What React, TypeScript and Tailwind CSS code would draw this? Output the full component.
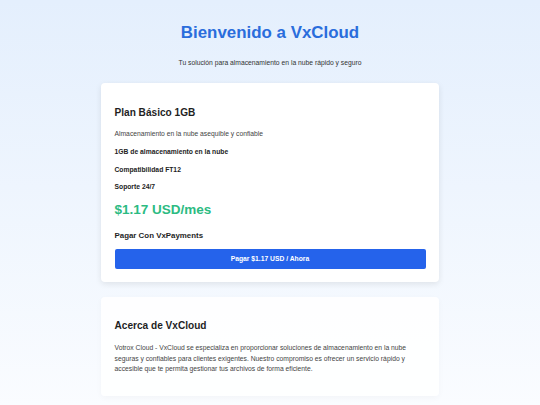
import React from "react";

export default function App() {
  return (
    <div
      className="min-h-[405px] w-full bg-gradient-to-b from-[#e4effd] to-[#fafcff] pb-[10px]"
      style={{ fontFamily: '"Liberation Sans", Arial, sans-serif' }}
    >
      <div className="mx-auto flex w-[338px] flex-col items-stretch pt-[23px]">
        <h1 className="text-center text-[16.9px] font-bold leading-[20px] text-[#2a6ddc]">
          Bienvenido a VxCloud
        </h1>
        <p className="mt-[16px] text-center text-[6.75px] leading-[8px] text-[#333]">
          Tu solución para almacenamiento en la nube rápido y seguro
        </p>

        <div className="mt-[16px] rounded-[4px] bg-white px-[13.5px] pt-[23.5px] pb-[13px] shadow-[0_2px_6px_rgba(0,0,0,0.09)]">
          <h2 className="text-[10.1px] font-bold leading-[12px] text-[#1f1f1f]">
            Plan Básico 1GB
          </h2>
          <p className="mt-[10.6px] text-[6.75px] leading-[10.8px] text-[#444]">
            Almacenamiento en la nube asequible y confiable
          </p>
          <p className="mt-[7px] text-[6.75px] font-bold leading-[10.8px] text-[#222]">
            1GB de almacenamiento en la nube
          </p>
          <p className="mt-[7px] text-[6.75px] font-bold leading-[10.8px] text-[#222]">
            Compatibilidad FT12
          </p>
          <p className="mt-[7px] text-[6.75px] font-bold leading-[10.8px] text-[#222]">
            Soporte 24/7
          </p>
          <p className="mt-[9.1px] text-[13.5px] font-bold leading-[16.2px] text-[#2cbb82]">
            $1.17 USD/mes
          </p>
          <h3 className="mt-[12.4px] text-[7.9px] font-bold leading-[9.4px] text-[#1f1f1f]">
            Pagar Con VxPayments
          </h3>
          <button className="mt-[9px] flex h-[20px] w-full items-center justify-center rounded-[2px] bg-[#2563eb] text-[6.75px] font-bold text-white">
            Pagar $1.17 USD / Ahora
          </button>
        </div>

        <div className="mt-[14.4px] rounded-[4px] bg-white/90 px-[13.5px] pt-[23.5px] pb-[21px] shadow-[0_2px_6px_rgba(0,0,0,0.03)]">
          <h2 className="text-[10.1px] font-bold leading-[12px] text-[#1f1f1f]">
            Acerca de VxCloud
          </h2>
          <p className="mt-[10.6px] text-[6.75px] leading-[10.8px] text-[#444]">
            Votrox Cloud - VxCloud se especializa en proporcionar soluciones de
            almacenamiento en la nube seguras y confiables para clientes
            exigentes. Nuestro compromiso es ofrecer un servicio rápido y
            accesible que te permita gestionar tus archivos de forma eficiente.
          </p>
        </div>
      </div>
    </div>
  );
}
